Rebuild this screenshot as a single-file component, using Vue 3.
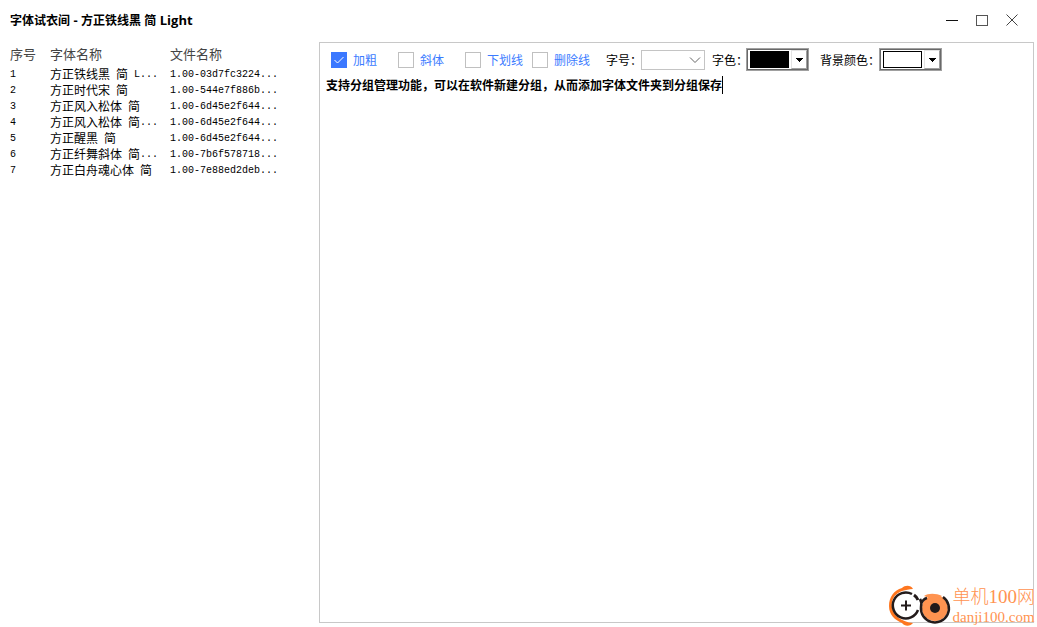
<script setup>
import { ref, computed } from 'vue'

const fonts = [
  { name: '方正铁线黑 简 L...', file: '1.00-03d7fc3224...' },
  { name: '方正时代宋 简', file: '1.00-544e7f886b...' },
  { name: '方正风入松体 简', file: '1.00-6d45e2f644...' },
  { name: '方正风入松体 简...', file: '1.00-6d45e2f644...' },
  { name: '方正醒黑 简', file: '1.00-6d45e2f644...' },
  { name: '方正纤舞斜体 简...', file: '1.00-7b6f578718...' },
  { name: '方正白舟魂心体 简', file: '1.00-7e88ed2deb...' },
]

// Latin runs are set in their own face and size
const runs = (text) =>
  (text.match(/[\x20-\x7e]+|[^\x20-\x7e]+/g) || []).map((t) => ({
    text: t,
    latin: /^[\x20-\x7e]/.test(t),
  }))

const title = '字体试衣间 - 方正铁线黑 简 Light'

const styles = ref([
  { id: 'bold', label: '加粗', on: true },
  { id: 'italic', label: '斜体', on: false },
  { id: 'underline', label: '下划线', on: false },
  { id: 'strike', label: '删除线', on: false },
])

const size = ref('')
const sizes = ['', '12', '14', '18', '24', '36']
const colors = ['#000000', '#ffffff', '#ff0000', '#0000ff']
const fore = ref('#000000')
const back = ref('#ffffff')
const sample = ref('支持分组管理功能，可以在软件新建分组，从而添加字体文件夹到分组保存')
const caretLeft = computed(() => `${6 + sample.value.length * 12}px`)
</script>

<template>
  <div class="window">
    <header class="titlebar">
      <h1><span v-for="(r, k) in runs(title)" :key="k" :class="{ wide: r.latin }">{{ r.text }}</span></h1>
      <div class="controls">
        <button type="button" aria-label="最小化">
          <svg width="12" height="12" shape-rendering="crispEdges"><path d="M0 6.5H12" stroke="#111" fill="none" /></svg>
        </button>
        <button type="button" aria-label="最大化">
          <svg width="12" height="12" shape-rendering="crispEdges"><path d="M.5 1.5H11.5V11.5H.5Z" stroke="#555" fill="none" /></svg>
        </button>
        <button type="button" aria-label="关闭">
          <svg width="12" height="12"><path d="M.5 .5L11.5 11.5M11.5 .5L.5 11.5" stroke="#444" fill="none" /></svg>
        </button>
      </div>
    </header>

    <main class="content">
      <div class="list">
        <table>
          <thead>
            <tr><th class="no">序号</th><th class="name">字体名称</th><th>文件名称</th></tr>
          </thead>
          <tbody>
            <tr v-for="(f, i) in fonts" :key="i">
              <td><span class="latin">{{ i + 1 }}</span></td>
              <td><span v-for="(r, k) in runs(f.name)" :key="k" :class="{ latin: r.latin }">{{ r.text }}</span></td>
              <td><span class="latin">{{ f.file }}</span></td>
            </tr>
          </tbody>
        </table>
      </div>

      <section class="panel">
        <div class="toolbar">
          <label v-for="s in styles" :key="s.id" class="check">
            <input v-model="s.on" type="checkbox" />
            <svg class="tick" width="16" height="16"><path d="M3.5 8L6.5 11L12.5 5" stroke="#fff" fill="none" /></svg>
            <span class="text">{{ s.label }}</span>
          </label>

          <label class="caption text size-caption" for="size">字号：</label>
          <div class="size">
            <select id="size" v-model="size">
              <option v-for="s in sizes" :key="s" :value="s">{{ s }}</option>
            </select>
            <svg width="12" height="8"><path d="M1 1.5L6 6.5L11 1.5" stroke="#666" fill="none" /></svg>
          </div>

          <label class="caption text fore-caption" for="fore">字色：</label>
          <div class="color">
            <select id="fore" v-model="fore">
              <option v-for="c in colors" :key="c" :value="c">{{ c }}</option>
            </select>
            <span class="swatch" :style="{ background: fore }"></span>
            <span class="drop"><svg width="7" height="4" shape-rendering="crispEdges"><path d="M0 0H7L3.5 4Z" /></svg></span>
          </div>

          <label class="caption text back-caption" for="back">背景颜色：</label>
          <div class="color">
            <select id="back" v-model="back">
              <option v-for="c in colors" :key="c" :value="c">{{ c }}</option>
            </select>
            <span class="swatch" :style="{ background: back }"></span>
            <span class="drop"><svg width="7" height="4" shape-rendering="crispEdges"><path d="M0 0H7L3.5 4Z" /></svg></span>
          </div>
        </div>

        <div class="editor">
          <textarea v-model="sample" aria-label="示例文字" spellcheck="false"></textarea>
          <i class="caret" :style="{ left: caretLeft }"></i>
        </div>
      </section>
    </main>

    <div class="brand">
      <svg width="67" height="45" viewBox="0 0 67 45" fill="none">
        <path d="M28 7C26 3 20 3 17 6C9 8 4 15 4 24C4 33 10 38 17 41C20 45 26 44 28 41C17 40 8 34 7 25C6 15 12 8 28 7Z" fill="#fe761f" />
        <circle cx="50" cy="26" r="13" fill="#ff9350" />
        <path d="M39 14C43 11 51 11 57 14L50 18Z" fill="#ff9350" />
        <path d="M27 12A13 13 0 1 0 33 28" stroke="#231b1b" stroke-width="2.5" />
        <path d="M29 13Q32 15 33 18" stroke="#231b1b" stroke-width="3" />
        <path d="M35 17Q37 20 36 25A14 14 0 1 0 58 15M42 16Q38 17 36 22" stroke="#231b1b" stroke-width="2.5" />
        <circle cx="50" cy="26" r="5" fill="#231b1b" />
        <path d="M16 23.500H26M21 18.500V28.500" stroke="#231b1b" stroke-width="2" />
      </svg>
      <div class="brand-text">
        <span class="brand-name">单机<span class="brand-number">100</span>网</span>
        <span class="brand-url">danji100.com</span>
      </div>
    </div>
  </div>
</template>

<style>
html,
body {
  margin: 0;
  background: #fff;
}
</style>

<style scoped>
.window {
  position: relative;
  box-sizing: border-box;
  display: flex;
  flex-direction: column;
  min-height: 100vh;
  padding: 0 3px 4px 0;
  font-family: "Liberation Sans", "Noto Sans CJK SC", sans-serif;
  font-size: 12px;
  line-height: 16px;
  color: #000;
}
.titlebar {
  display: flex;
  justify-content: space-between;
  align-items: center;
  height: 40px;
  padding: 0 10px;
  margin-bottom: 2px;
}
h1 {
  margin: 0;
  font: bold 12px/16px "Open Sans", "Noto Sans CJK SC", sans-serif;
  white-space: pre;
}
.wide {
  font-size: 13px;
}
.controls {
  display: flex;
  gap: 6px;
}
.controls button {
  display: grid;
  place-items: center;
  width: 24px;
  height: 24px;
  padding: 0;
  border: 0;
  background: none;
}
.content {
  flex: 1;
  display: flex;
}
.list {
  flex: 0 0 319px;
  box-sizing: border-box;
  padding: 1px 10px;
}
table {
  width: 100%;
  table-layout: fixed;
  border-collapse: collapse;
}
th {
  height: 24px;
  padding: 0;
  font-size: 13px;
  font-weight: normal;
  text-align: left;
  color: #444;
}
.no {
  width: 40px;
}
.name {
  width: 120px;
}
td {
  height: 16px;
  padding: 0;
  line-height: 16px;
  white-space: pre;
}
td span {
  display: inline-block;
  height: 16px;
  vertical-align: top;
}
.latin {
  font-family: "Liberation Mono", monospace;
  font-size: 10px;
}
.panel {
  flex: 1;
  display: flex;
  flex-direction: column;
  border: 1px solid #c8c8c8;
}
.toolbar {
  display: flex;
  align-items: center;
  height: 33px;
  padding-left: 11px;
}
.text {
  padding-top: 2px;
}
.check {
  display: grid;
  grid-template-columns: 16px auto;
  align-items: center;
  column-gap: 6px;
  width: 67px;
  justify-content: start;
  color: #3b7bff;
}
.check input {
  grid-area: 1 / 1;
  appearance: none;
  width: 16px;
  height: 16px;
  margin: 0;
  border: 1px solid #c0c0c0;
  background: #fff;
}
.check input:checked {
  border-color: #3b78ff;
  background: #3b78ff;
}
.tick {
  grid-area: 1 / 1;
  pointer-events: none;
}
.check input:not(:checked) + .tick {
  visibility: hidden;
}
.caption {
  white-space: nowrap;
}
.size-caption {
  width: 35px;
  margin-left: 7px;
}
.fore-caption {
  width: 34px;
  margin-left: 7px;
}
.back-caption {
  width: 59px;
  margin-left: 11px;
}
.size {
  display: grid;
  grid-template-columns: 1fr 16px;
  align-items: center;
  width: 64px;
  height: 20px;
}
.size select {
  grid-area: 1 / 1 / 2 / 3;
  appearance: none;
  width: 100%;
  height: 20px;
  padding: 0 4px;
  border: 1px solid #c4c4c4;
  border-radius: 0;
  background: #fff;
}
.size svg {
  grid-area: 1 / 2;
  pointer-events: none;
}
.color {
  box-sizing: border-box;
  display: grid;
  grid-template-columns: 43px 1fr;
  width: 63px;
  height: 23px;
  border: 1px solid #a0a0a0;
  box-shadow: inset 0 0 0 1px #696969;
}
.color select {
  grid-area: 1 / 1 / 2 / 3;
  appearance: none;
  min-width: 0;
  padding: 0;
  border: 0;
  background: none;
  color: transparent;
}
.swatch {
  grid-area: 1 / 1;
  margin: 2px 1px 2px 3px;
  box-sizing: border-box;
  border: 1px solid #000;
  pointer-events: none;
}
.drop {
  grid-area: 1 / 2;
  display: grid;
  place-items: center;
  margin: 1px;
  border: 1px solid;
  border-color: #e3e3e3 #a0a0a0 #a0a0a0 #e3e3e3;
  background: #fff;
  pointer-events: none;
}
.editor {
  position: relative;
  flex: 1;
  display: flex;
}
textarea {
  flex: 1;
  padding: 1px 6px;
  border: 0;
  outline: 0;
  resize: none;
  background: none;
  color: #000;
  font: bold 12px/16px "Noto Sans CJK SC", sans-serif;
}
.caret {
  position: absolute;
  top: 0;
  width: 1px;
  height: 18px;
  background: #000;
}
.brand {
  position: absolute;
  right: 2px;
  bottom: 0;
  display: flex;
  align-items: flex-end;
  gap: 1px;
  pointer-events: none;
}
.brand-text {
  display: flex;
  flex-direction: column;
  color: #ff9350;
  font-family: "Liberation Serif", "Noto Sans CJK SC", serif;
}
.brand-name {
  font-size: 18px;
  line-height: 20px;
  font-weight: 300;
}
.brand-number {
  font-size: 19px;
}
.brand-url {
  font-size: 15px;
  line-height: 20px;
}
</style>
